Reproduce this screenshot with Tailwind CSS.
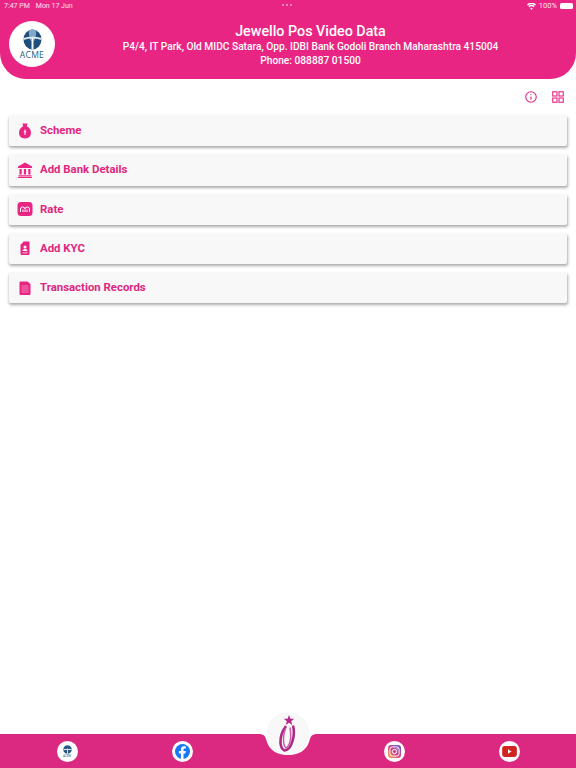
<!DOCTYPE html>
<html lang="en">
<head>
    <meta charset="UTF-8">
    <meta name="viewport" content="width=device-width, initial-scale=1.0">
    <title>Jewello Pos Video Data</title>
    <script src="https://cdn.jsdelivr.net/npm/@tailwindcss/browser@4"></script>
</head>
<body class="bg-white font-['Roboto',sans-serif] w-[576px] h-[768px] overflow-hidden flex flex-col relative">
    <!-- header -->
    <header class="bg-[#e92583] h-[79px] rounded-b-[26px] text-white shrink-0">
        <div class="h-[11px] flex items-center justify-between pl-[4px] pr-[3px] text-[7px] text-white/85 relative">
            <div class="flex gap-[6px] pt-[1px]"><span>7:47 PM</span><span>Mon 17 Jun</span></div>
            <div class="absolute left-[282px] top-[4px] flex gap-[2px]">
                <i class="w-[2px] h-[2px] rounded-full bg-white/60"></i><i class="w-[2px] h-[2px] rounded-full bg-white/60"></i><i class="w-[2px] h-[2px] rounded-full bg-white/60"></i>
            </div>
            <div class="flex items-center gap-[3px] pt-[1px]">
                <svg width="9" height="7" viewBox="0 0 24 18" fill="white"><path d="M12 18l-3.600-4.400a5.600 5.600 0 0 1 7.200 0zM5.900 10.700l-2.300-2.800a13 13 0 0 1 16.800 0l-2.300 2.800a9.500 9.500 0 0 0-12.200 0zM2.300 6.300L0 3.600a18.800 18.800 0 0 1 24 0l-2.300 2.700a15.200 15.200 0 0 0-19.400 0z"/></svg>
                <span class="text-[7.500px]">100%</span>
                <span class="w-[13px] h-[6px] rounded-[1.500px] bg-white"></span>
            </div>
        </div>
        <div class="flex items-center h-[68px] pl-[9px]">
            <div class="w-[46px] h-[46px] rounded-full bg-white shrink-0 flex flex-col items-center justify-center -mt-[3px]">
                <svg width="19" height="21" viewBox="0 0 20 22">
                    <ellipse cx="10" cy="11" rx="9.500" ry="10.500" fill="#1e4e7c"/>
                    <path d="M6 1.500Q6 10 8.800 13L8.800 21.500H11.200L11.200 13Q14 10 14 1.500Q10 -.5 6 1.500Z" fill="#7fa9c6"/>
                    <path d="M.5 9.500Q10 6.500 19.500 9.500L19.500 11.500Q10 8.500 .5 11.500Z" fill="#e3edf3"/>
                    <path d="M9.200 9H10.800V21.500H9.200Z" fill="#f1f6f9"/>
                </svg>
                <span class="text-[8.500px] leading-[9px] tracking-[0.3px] text-[#1f5d78] font-['Open_Sans',sans-serif]">ACME</span>
            </div>
            <div class="flex-1 text-center font-medium -ml-[6px] pr-[4px]">
                <h1 class="text-[14.300px] leading-[19px]">Jewello Pos Video Data</h1>
                <p class="text-[10.200px] leading-[14px] -mt-[1px]">P4/4, IT Park, Old MIDC Satara, Opp. IDBI Bank Godoli Branch Maharashtra 415004</p>
                <p class="text-[10.200px] leading-[14px]">Phone: 088887 01500</p>
            </div>
        </div>
    </header>

    <!-- toolbar -->
    <div class="flex justify-end items-center gap-[15px] h-[36px] pr-[12px] shrink-0">
        <svg width="12" height="12" viewBox="0 0 24 24" fill="none" stroke="#d92b84" stroke-width="2.200"><circle cx="12" cy="12" r="10.500"/><path d="M12 11v6.500M12 6.500v2"/></svg>
        <svg width="12" height="12" viewBox="0 0 24 24" fill="none" stroke="#e92583" stroke-width="2.200"><rect x="1.500" y="1.500" width="8.500" height="8.500"/><rect x="14" y="1.500" width="8.500" height="8.500"/><rect x="1.500" y="14" width="8.500" height="8.500"/><rect x="14" y="14" width="8.500" height="8.500"/></svg>
    </div>

    <!-- menu -->
    <main class="flex flex-col gap-[8px] px-[9px] shrink-0">
        <a class="h-[31.250px] flex items-center gap-[7px] pl-[8px] bg-[#f8f8f8] rounded-[2px] shadow-[0.5px_2px_3px_rgba(0,0,0,0.33)] text-[#e0267f] text-[11.400px] font-bold">
            <svg class="w-[16px] h-[16px]" viewBox="0 0 16 16" fill="#e92583"><path d="M5.500 .5h5L9.800 3.300Q14 5.500 14 9.800Q14 15.500 8 15.500Q2 15.500 2 9.800Q2 5.500 6.200 3.300Z"/><path d="M8 6.500v5.500M6.800 8.800h2.400" stroke="#fff" stroke-width="1"/></svg>
            Scheme
        </a>
        <a class="h-[31.250px] flex items-center gap-[7px] pl-[8px] bg-[#f8f8f8] rounded-[2px] shadow-[0.5px_2px_3px_rgba(0,0,0,0.33)] text-[#e0267f] text-[11.400px] font-bold">
            <svg class="w-[16px] h-[16px]" viewBox="0 0 16 16" fill="#e92583"><path d="M8 .5L15 4.500V6H1V4.500Z"/><path d="M2.500 7h2.200v5.500H2.500zM6.900 7h2.200v5.500H6.900zM11.300 7h2.200v5.500h-2.200zM1.500 13.200h13V14.500h-13zM1 15h14v1H1z"/></svg>
            Add Bank Details
        </a>
        <a class="h-[31.250px] flex items-center gap-[7px] pl-[8px] bg-[#f8f8f8] rounded-[2px] shadow-[0.5px_2px_3px_rgba(0,0,0,0.33)] text-[#e0267f] text-[11.400px] font-bold">
            <svg class="w-[16px] h-[16px]" viewBox="0 0 16 16"><rect x=".5" y="1" width="15" height="14" rx="3.500" fill="#e92583"/><path d="M3.500 11V8Q3.500 6 5.500 6Q8 6 8 8Q8 6 10.500 6Q12.500 6 12.500 8V11M6 8.500v2.500M10 8.500v2.500M8 8.500v2.500" fill="none" stroke="#fff" stroke-width="1"/></svg>
            Rate
        </a>
        <a class="h-[31.250px] flex items-center gap-[7px] pl-[8px] bg-[#f8f8f8] rounded-[2px] shadow-[0.5px_2px_3px_rgba(0,0,0,0.33)] text-[#e0267f] text-[11.400px] font-bold">
            <svg class="w-[16px] h-[16px]" viewBox="0 0 16 16"><path d="M5 3.500L6.500 1.500H12.500V14Q12.500 15 11.500 15H4.500Q3.500 15 3.500 14V4.500Z" fill="#e92583"/><circle cx="8" cy="7" r="1.500" fill="#fff"/><path d="M5.500 11Q5.500 9 8 9Q10.500 9 10.500 11ZM5.500 12.500h5v.8h-5z" fill="#fff"/></svg>
            Add KYC
        </a>
        <a class="h-[31.250px] flex items-center gap-[7px] pl-[8px] bg-[#f8f8f8] rounded-[2px] shadow-[0.5px_2px_3px_rgba(0,0,0,0.33)] text-[#e0267f] text-[11.400px] font-bold">
            <svg class="w-[16px] h-[16px]" viewBox="0 0 16 16"><path d="M3.500 1.500H10.500L13.500 4V14Q13.500 15 12.500 15H3.500Q2.500 15 2.500 14V2.500Q2.500 1.500 3.500 1.500Z" fill="#e92583"/><path d="M4.500 6h7M4.500 8h7M4.500 10h7M4.500 12h7" stroke="#f9a8d0" stroke-width=".7"/></svg>
            Transaction Records
        </a>
    </main>

    <!-- bottom bar -->
    <footer class="mt-auto h-[34px] bg-[#db2880] flex items-center justify-center shrink-0">
        <div class="w-[21px] h-[21px] rounded-full bg-white flex flex-col items-center justify-center">
            <svg width="9" height="9" viewBox="0 0 20 20"><circle cx="10" cy="10" r="9.500" fill="#2a5a86"/><path d="M9 8h2v12H9zM1 9h18v2H1z" fill="#dbe7ef"/></svg>
            <span class="text-[3px] leading-[4px] text-[#1f5d78]">ACME</span>
        </div>
        <div class="w-[21px] h-[21px] rounded-full bg-white flex items-center justify-center ml-[94px]">
            <svg width="15" height="15" viewBox="0 0 24 24"><circle cx="12" cy="12" r="12" fill="#1877f2"/><path d="M13.600 24V15h3l.6-3.700h-3.600V9c0-1.100.5-2 2.100-2h1.600V3.800S15.800 3.600 14.400 3.600c-3 0-4.900 1.800-4.900 5.100v2.600H6.200V15h3.300v9z" fill="#fff"/></svg>
        </div>
        <div class="w-[191px] shrink-0"></div>
        <div class="w-[21px] h-[21px] rounded-full bg-white flex items-center justify-center">
            <svg width="13" height="13" viewBox="0 0 24 24" fill="none">
                <defs><linearGradient id="ig" x1="0" y1="1" x2="1" y2="0"><stop offset="0" stop-color="#fdb44b"/><stop offset=".45" stop-color="#d9417f"/><stop offset="1" stop-color="#4f5bd5"/></linearGradient></defs>
                <rect width="24" height="24" rx="6" fill="url(#ig)"/><rect x="3.500" y="3.500" width="17" height="17" rx="4.500" stroke="#fff" stroke-width="1.800"/><circle cx="12" cy="12" r="4" stroke="#fff" stroke-width="1.800"/><circle cx="17" cy="7" r="1.200" fill="#fff"/>
            </svg>
        </div>
        <div class="w-[21px] h-[21px] rounded-full bg-white flex items-center justify-center ml-[94px]">
            <svg width="15" height="11" viewBox="0 0 24 18"><rect width="24" height="18" rx="4" fill="#cf2420"/><path d="M9.500 5.500v7l6-3.500z" fill="#fff"/></svg>
        </div>
    </footer>

    <!-- center badge over the bar -->
    <svg class="absolute left-[258px] top-[712px]" width="60" height="44" viewBox="0 0 60 44">
        <path d="M0 22C7 22 7 24 9 30C12 39 20 43 30 43C40 43 48 39 51 30C53 24 53 22 60 22Z" fill="#fff"/>
        <circle cx="30" cy="21.500" r="21.500" fill="#f9f8f9"/>
        <path d="M31 3l1.400 3.700 3.900.1-3.100 2.400 1.100 3.800-3.300-2.200-3.300 2.200 1.100-3.800-3.100-2.400 3.900-.1z" fill="#b5288a"/>
        <path d="M28 14Q22 22 22.500 31Q23 37 26.500 38.500Q32 38 34.500 29Q37 21 35 13.500" fill="none" stroke="#a92b86" stroke-width="2.600"/>
        <path d="M27.800 16Q24.800 23 25.700 31Q26.200 35 28.200 36Q32 33 32.600 26Q33 21 32 15.500" fill="none" stroke="#cf5aa6" stroke-width="1.500"/>
    </svg>
</body>
</html>
